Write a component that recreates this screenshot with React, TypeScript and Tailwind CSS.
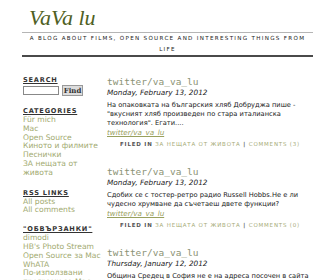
import React from "react";

const categories = ["Für mich", "Mac", "Open Source", "Киното и филмите", "Песнички", "ЗА нещата от живота"];
const rss = ["All posts", "All comments"];
const links = ["dimodi", "HB's Photo Stream", "Open Source за Mac", "WhATA", "По-използвани програми за Mac"];

const posts = [
  {
    date: "Monday, February 13, 2012",
    body: "На опаковката на българския хляб Добруджа пише - \"вкусният хляб произведен по стара италианска технология\". Егати....",
    comments: 3,
  },
  {
    date: "Monday, February 13, 2012",
    body: "Сдобих се с тостер-ретро радио Russell Hobbs.Не е ли чудесно хрумване да съчетаеш двете функции?",
    comments: 0,
  },
  {
    date: "Thursday, January 12, 2012",
    body: "Община Средец в София не е на адреса посочен в сайта им. Не е ли странно?",
    comments: 1,
  },
];

function SideHeading({ children }: { children: React.ReactNode }) {
  return (
    <h2 className="text-[6.6px] leading-[8px] font-bold tracking-[0.8px] underline text-[#333] uppercase">{children}</h2>
  );
}

function SideList({ items }: { items: string[] }) {
  return (
    <ul className="mt-[1px]">
      {items.map((item) => (
        <li key={item} className="text-[7.6px] leading-[8.8px] text-[#a2aa70]">
          {item}
        </li>
      ))}
    </ul>
  );
}

export default function App() {
  return (
    <div className="w-[336px] h-[280px] overflow-hidden bg-white font-['DejaVu_Sans',sans-serif]">
      <div className="mx-[22px] w-[291px]">
        {/* Header */}
        <div className="pt-[5px] pl-[7px] h-[32px] font-['Liberation_Serif',serif] italic text-[22px] leading-[26px] text-[#4f5f24]">
          VaVa lu
        </div>
        <div className="border-t border-[#b5b5b5] border-b-2 border-b-[#4a4a4a] text-center text-[5.6px] leading-[11px] tracking-[1.3px] text-[#222] uppercase">
          A blog about films, open source and interesting things from
          <br />
          life
        </div>

        <div className="flex mt-[19px]">
          {/* Sidebar */}
          <aside className="w-[85px] shrink-0 pl-[1px]">
            <SideHeading>Search</SideHeading>
            <div className="flex items-center gap-[3px] mt-[1px]">
              <input className="w-[36px] h-[9px] border border-[#888] bg-white" />
              <button className="h-[11px] w-[21px] bg-[#ddd] border border-[#999] text-[7px] leading-[9px] font-bold font-['DejaVu_Serif',serif] text-[#333]">
                Find
              </button>
            </div>

            <div className="mt-[11px]">
              <SideHeading>Categories</SideHeading>
              <SideList items={categories} />
            </div>
            <div className="mt-[11px]">
              <SideHeading>RSS Links</SideHeading>
              <SideList items={rss} />
            </div>
            <div className="mt-[10px]">
              <SideHeading>"Обвързанки"</SideHeading>
              <SideList items={links} />
            </div>
          </aside>

          {/* Main */}
          <main className="flex-1">
            {posts.map((p, i) => (
              <article key={i} className="mb-[18px]">
                <h3 className="font-['DejaVu_Sans_Mono',monospace] text-[9.5px] leading-[12px] text-[#8b9274]">
                  twitter/va_va_lu
                </h3>
                <div className="italic text-[7.3px] leading-[10px] text-[#222]">{p.date}</div>
                <p className="text-[6.7px] leading-[9px] text-[#222] mt-[3px]">{p.body}</p>
                <a className="block italic underline text-[7.2px] leading-[9px] text-[#98a05e]">twitter/va_va_lu</a>
                <div className="text-center text-[5.5px] leading-[8px] tracking-[0.8px] uppercase mt-[3px]">
                  <span className="font-bold text-[#555]">Filed in </span>
                  <span className="text-[#a6ab78]">ЗА нещата от живота</span>
                  <span className="text-[#555] font-bold"> | </span>
                  <span className="text-[#a6ab78]">Comments ({p.comments})</span>
                </div>
              </article>
            ))}
          </main>
        </div>
      </div>
    </div>
  );
}
